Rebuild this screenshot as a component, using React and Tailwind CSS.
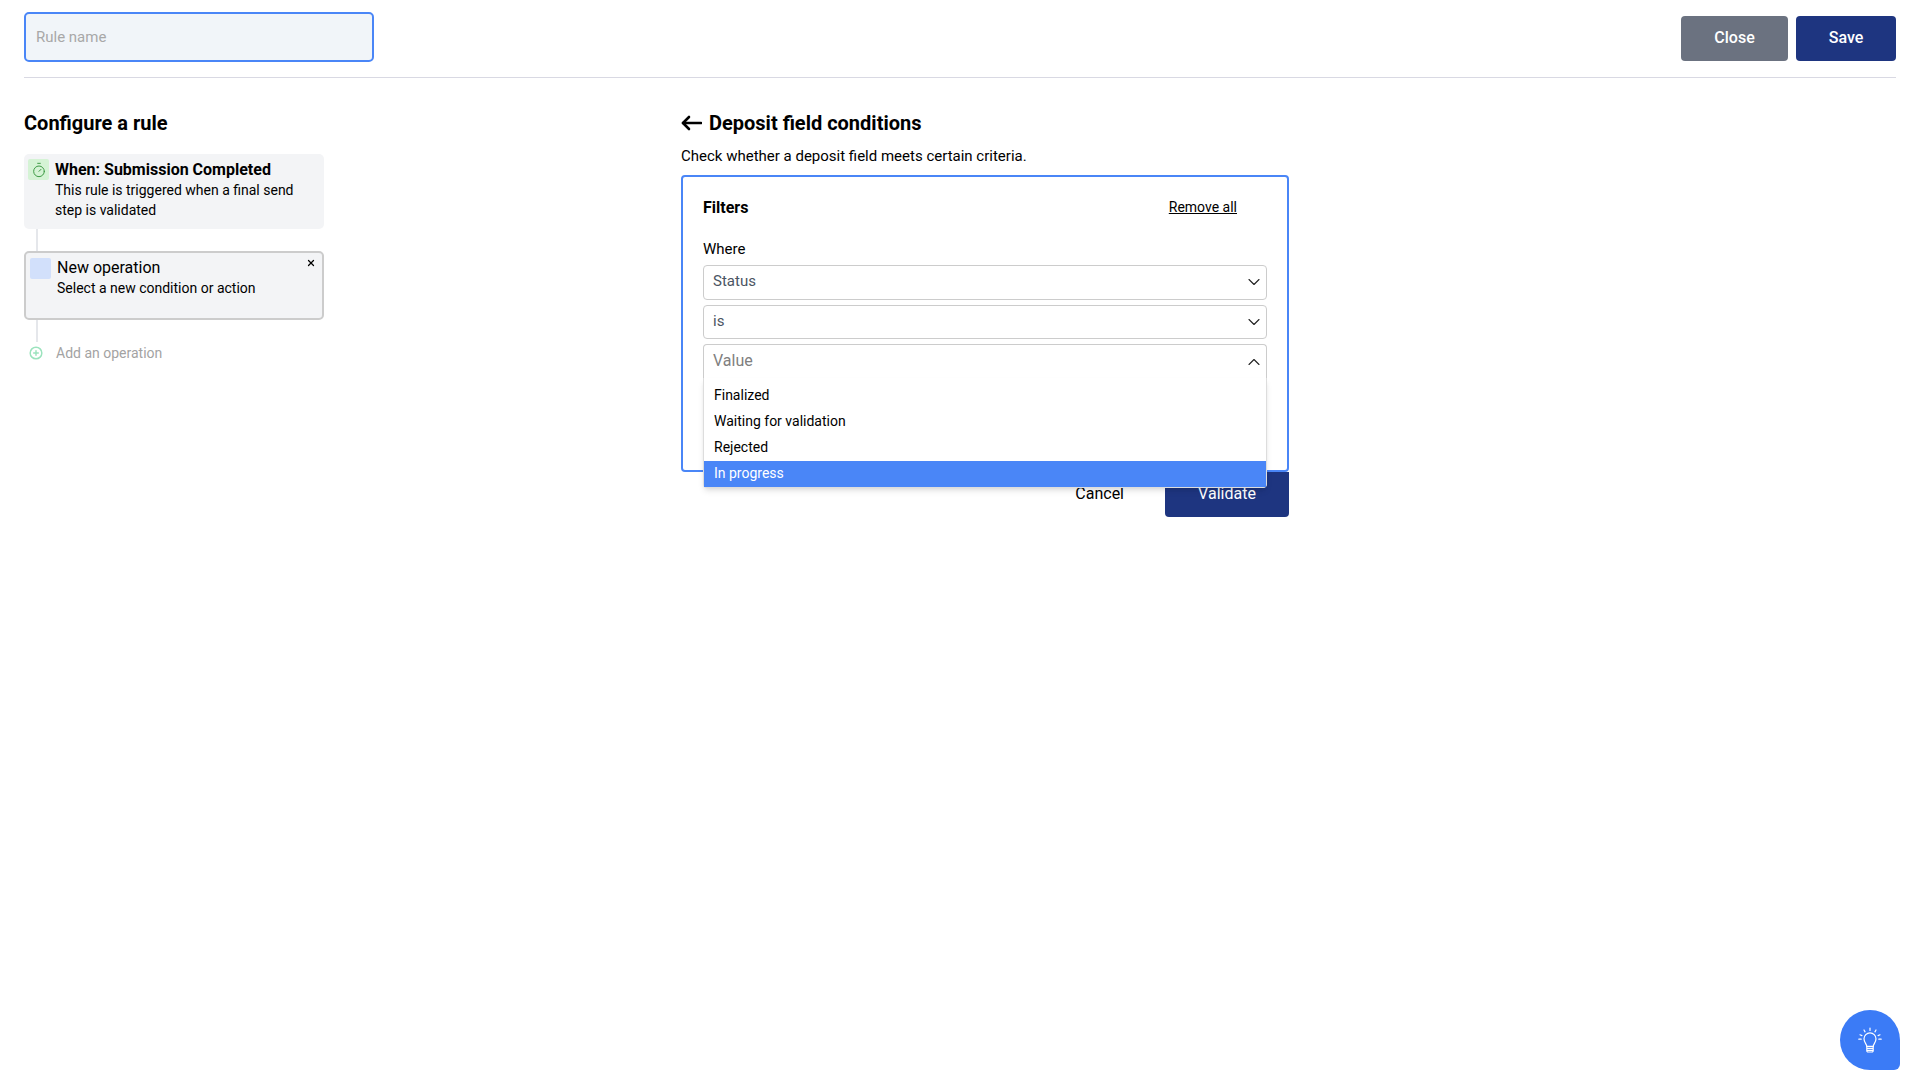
import React from 'react';
import { ChevronDown, ChevronUp, Timer, CirclePlus, X } from 'lucide-react';

const SelectBox = ({ label, className = '' }) => (
    <div className={`flex h-[34.5px] items-center justify-between rounded border border-[#cccccc] pl-[9px] pr-[2px] text-[15px] text-[#4b5563] ${className}`}>
        <span className="pb-[2px]">{label}</span>
        <ChevronDown size={20} strokeWidth={1.35} className="text-[#222222]" />
    </div>
);

const BackArrow = () => (
    <svg width="21" height="16" viewBox="0 0 21 16" fill="none" stroke="black" strokeWidth="2.6" strokeLinecap="round" strokeLinejoin="round">
        <path d="M20 8H2" />
        <path d="M8 2L2 8l6 6" />
    </svg>
);

const BulbIcon = () => (
    <svg width="24" height="26" viewBox="0 0 30 32" fill="none" stroke="white" strokeWidth="1.5" strokeLinecap="round" strokeLinejoin="round">
        <path d="M15 1v3M7.5 3.5l1.3 2.3M22.5 3.5l-1.3 2.3M2.5 9.5l2.4 1M27.5 9.5l-2.4 1M1 15h3M26 15h3" />
        <path d="M11 24c0-3-3.5-4.5-3.5-9.5a7.5 7.5 0 0 1 15 0c0 5-3.5 6.5-3.5 9.5z" />
        <path d="M11 24v5.5a1.5 1.5 0 0 0 1.5 1.5h5a1.5 1.5 0 0 0 1.5-1.5V24M11 26.5h8M11 29h8" />
    </svg>
);

const App = () => {
    const options = ['Finalized', 'Waiting for validation', 'Rejected'];

    return (
        <div className="relative h-[1080px] w-[1920px] overflow-hidden bg-white px-6 font-['Roboto',sans-serif] text-black">
            <div className="flex h-[78px] items-start justify-between border-b border-[#d9d9e3] pt-3">
                <input
                    placeholder="Rule name"
                    className="h-[50px] w-[350px] rounded-[5px] border-2 border-[#4a86f7] bg-[#f1f5f9] px-[10px] text-[15px] outline-none placeholder:text-[#a8a8a8]"
                />
                <div className="flex gap-2 pt-1">
                    <button className="h-[45px] w-[107px] rounded-[4px] bg-[#6b7280] pb-[2px] text-[16px] font-medium text-white">Close</button>
                    <button className="h-[45px] w-[100px] rounded-[4px] bg-[#1e3580] pb-[2px] text-[16px] font-medium text-white">Save</button>
                </div>
            </div>

            <div className="flex pt-[33px]">
                <div className="w-[657px] shrink-0">
                    <h2 className="h-[24px] text-[20px] leading-[24px] font-bold">Configure a rule</h2>
                    <div className="mt-[19px] w-[300px]">
                        <div className="flex h-[75px] rounded-[5px] bg-[#f3f4f6] pl-1 pt-[5px]">
                            <div className="flex h-[21px] w-[21px] shrink-0 items-center justify-center rounded-[2px] bg-[#d5f3d5]">
                                <Timer size={16} strokeWidth={1.5} className="text-[#3f9b46]" />
                            </div>
                            <div className="pl-[6px] pt-px text-[14px] leading-[20px]">
                                <div className="text-[16px] font-bold">When: Submission Completed</div>
                                <div className="w-[255px]">This rule is triggered when a final send step is validated</div>
                            </div>
                        </div>
                        <div className="ml-[12px] h-[22px] w-[2px] bg-[#e5e7eb]" />
                        <div className="relative flex h-[69px] rounded-[5px] border-2 border-[#cccccc] bg-[#f3f4f6] pl-1 pt-[5px]">
                            <div className="h-[21px] w-[21px] shrink-0 rounded-[2px] bg-[#d2e0fb]" />
                            <div className="pl-[6px] text-[14px] leading-[20px]">
                                <div className="text-[16px]">New operation</div>
                                <div>Select a new condition or action</div>
                            </div>
                            <X size={10} strokeWidth={3} className="absolute right-[6px] top-[5px]" />
                        </div>
                        <div className="ml-[12px] h-[22px] w-[2px] bg-[#e5e7eb]" />
                        <div className="flex items-center text-[14px] text-[#a3a3a3]">
                            <CirclePlus size={14} strokeWidth={2.5} className="ml-[5px] text-[#9be3bd]" />
                            <span className="pl-[13px] pt-px">Add an operation</span>
                        </div>
                    </div>
                </div>

                <div className="w-[608px]">
                    <div className="flex h-[24px] items-center gap-[7px]">
                        <BackArrow />
                        <h2 className="text-[20px] leading-[24px] font-bold">Deposit field conditions</h2>
                    </div>
                    <p className="mt-[12px] text-[15px] leading-[18px]">Check whether a deposit field meets certain criteria.</p>
                    <div className="mt-[10px] h-[297px] rounded-[4px] border-2 border-[#4a86f7] px-5 pt-[19px]">
                        <div className="flex items-center justify-between pr-[30px]">
                            <span className="text-[16px] font-bold">Filters</span>
                            <span className="pb-[2px] text-[14px] underline">Remove all</span>
                        </div>
                        <div className="mt-[20px] text-[15px] leading-[18px]">Where</div>
                        <SelectBox label="Status" className="mt-[7px]" />
                        <SelectBox label="is" className="mt-[5px]" />
                        <div className="relative mt-[5px]">
                            <div className="flex h-[34px] items-center justify-between rounded-t border border-b-0 border-[#cccccc] pl-[9px] pr-[2px] text-[16px] text-[#808080]">
                                <span className="pb-[2px]">Value</span>
                                <ChevronUp size={20} strokeWidth={1.35} className="text-[#222222]" />
                            </div>
                            <div className="absolute left-0 right-0 top-[34px] z-10 rounded-b border-x border-b border-[#dddddd] bg-white pt-[5px] text-[14px] shadow-md">
                                {options.map((option) => (
                                    <div key={option} className="flex h-[26px] items-center px-[10px] pb-[2px]">{option}</div>
                                ))}
                                <div className="flex h-[26px] items-center bg-[#4a86f7] px-[10px] pb-[2px] text-white">In progress</div>
                            </div>
                        </div>
                    </div>
                    <div className="flex items-center justify-end gap-[41px]">
                        <span className="pb-[2px] text-[16px]">Cancel</span>
                        <button className="h-[45px] w-[124px] rounded-b-[4px] bg-[#1e3580] pb-[2px] text-[16px] text-white">Validate</button>
                    </div>
                </div>
            </div>

            <div className="absolute bottom-[10px] right-[20px] flex h-[60px] w-[60px] items-center justify-center rounded-[30px_30px_6px_30px] bg-[#3b7bf6]">
                <BulbIcon />
            </div>
        </div>
    );
};

export default App;
